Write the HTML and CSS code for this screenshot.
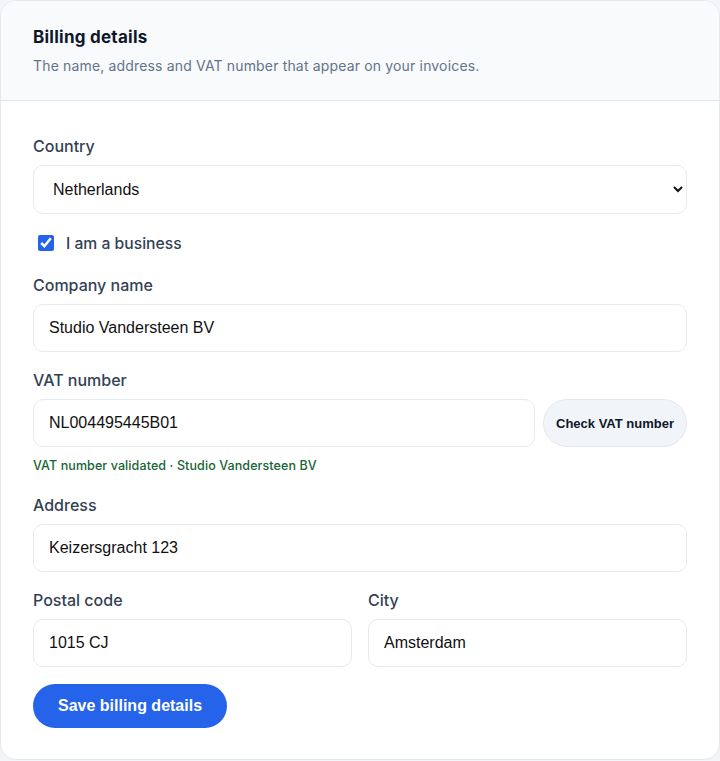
FILE: index.html
```html
<!DOCTYPE html>
<html lang="en">
<head>
<meta charset="utf-8">
<title>Billing details</title>
<link rel="stylesheet" href="styles.css">
</head>
<body>
<section class="card">
  <header class="card-header">
    <h2 class="title">Billing details</h2>
    <p class="subtitle">The name, address and VAT number that appear on your invoices.</p>
  </header>
  <form class="card-body">
    <div class="field">
      <label class="label" for="country">Country</label>
      <select id="country" class="control select">
        <option>Netherlands</option>
        <option>Belgium</option>
        <option>Germany</option>
      </select>
    </div>
    <label class="check">
      <input type="checkbox" checked>
      <span>I am a business</span>
    </label>
    <div class="field">
      <label class="label" for="company">Company name</label>
      <input id="company" class="control" type="text" value="Studio Vandersteen BV">
    </div>
    <div class="field">
      <label class="label" for="vat">VAT number</label>
      <div class="vat-row">
        <input id="vat" class="control" type="text" value="NL004495445B01">
        <button type="button" class="btn-secondary">Check VAT number</button>
      </div>
      <p class="help">VAT number validated · Studio Vandersteen BV</p>
    </div>
    <div class="field">
      <label class="label" for="address">Address</label>
      <input id="address" class="control" type="text" value="Keizersgracht 123">
    </div>
    <div class="split">
      <div class="field">
        <label class="label" for="postal">Postal code</label>
        <input id="postal" class="control" type="text" value="1015 CJ">
      </div>
      <div class="field">
        <label class="label" for="city">City</label>
        <input id="city" class="control" type="text" value="Amsterdam">
      </div>
    </div>
    <div class="actions">
      <button type="button" class="btn-primary">Save billing details</button>
    </div>
  </form>
</section>
</body>
</html>
```
FILE: styles.css
```css
* { box-sizing: border-box; }

html, body {
  margin: 0;
  padding: 0;
  background: #f3f5f8;
}

body {
  font-family: Inter, "Noto Sans", sans-serif;
  color: #0f172a;
}

.card {
  width: 720px;
  background: #ffffff;
  border: 1px solid #e2e8f0;
  border-radius: 16px;
  overflow: hidden;
}

.card-header {
  background: #f8fafc;
  border-bottom: 1px solid #e2e8f0;
  padding: 24px 32px 24px;
}

.title {
  margin: 0;
  font-size: 17px;
  line-height: 24px;
  font-weight: 700;
  letter-spacing: 0.25px;
  color: #0f172a;
}

.subtitle {
  margin: 7px 0 0;
  font-size: 14px;
  line-height: 20px;
  letter-spacing: 0.16px;
  color: #64748b;
}

.card-body {
  display: flex;
  flex-direction: column;
  gap: 17px;
  padding: 34px 32px 31px;
}

.field {
  display: flex;
  flex-direction: column;
  min-width: 0;
}

.label {
  font-size: 16px;
  line-height: 22px;
  font-weight: 500;
  color: #334155;
  margin-bottom: 8px;
}

.control {
  height: 48px;
  width: 100%;
  padding: 0 15px;
  border: 1px solid #e5e9f0;
  border-radius: 10px;
  background: #ffffff;
  font-family: "Liberation Sans", Arial, sans-serif;
  font-size: 16px;
  color: #111111;
  outline: none;
}

.select {
  height: 49px;
}

.check {
  display: flex;
  align-items: center;
  gap: 12px;
  height: 22px;
  margin: 1px 0 3px;
  font-size: 15.7px;
  font-weight: 500;
  color: #334155;
}

.check input {
  width: 16px;
  height: 16px;
  margin: 0 0 0 5px;
  accent-color: #2563eb;
}

.vat-row {
  display: flex;
  gap: 8px;
}

.vat-row .control {
  flex: 1;
  min-width: 0;
}

.btn-secondary {
  flex: none;
  height: 48px;
  padding: 0 12px;
  border: 1px solid #e2e8f0;
  border-radius: 999px;
  background: #f1f5f9;
  font-family: "Liberation Sans", Arial, sans-serif;
  font-size: 13px;
  font-weight: 700;
  color: #0f172a;
}

.help {
  margin: 10px 0 2px;
  font-size: 12.5px;
  line-height: 18px;
  font-weight: 500;
  letter-spacing: 0.1px;
  color: #166534;
}

.split {
  display: grid;
  grid-template-columns: 1fr 1fr;
  gap: 16px;
}

.actions {
  display: flex;
}

.btn-primary {
  height: 44px;
  padding: 0 25px;
  border: none;
  border-radius: 999px;
  background: #2563eb;
  font-family: "Liberation Sans", Arial, sans-serif;
  font-size: 16px;
  font-weight: 700;
  color: #ffffff;
}
```
